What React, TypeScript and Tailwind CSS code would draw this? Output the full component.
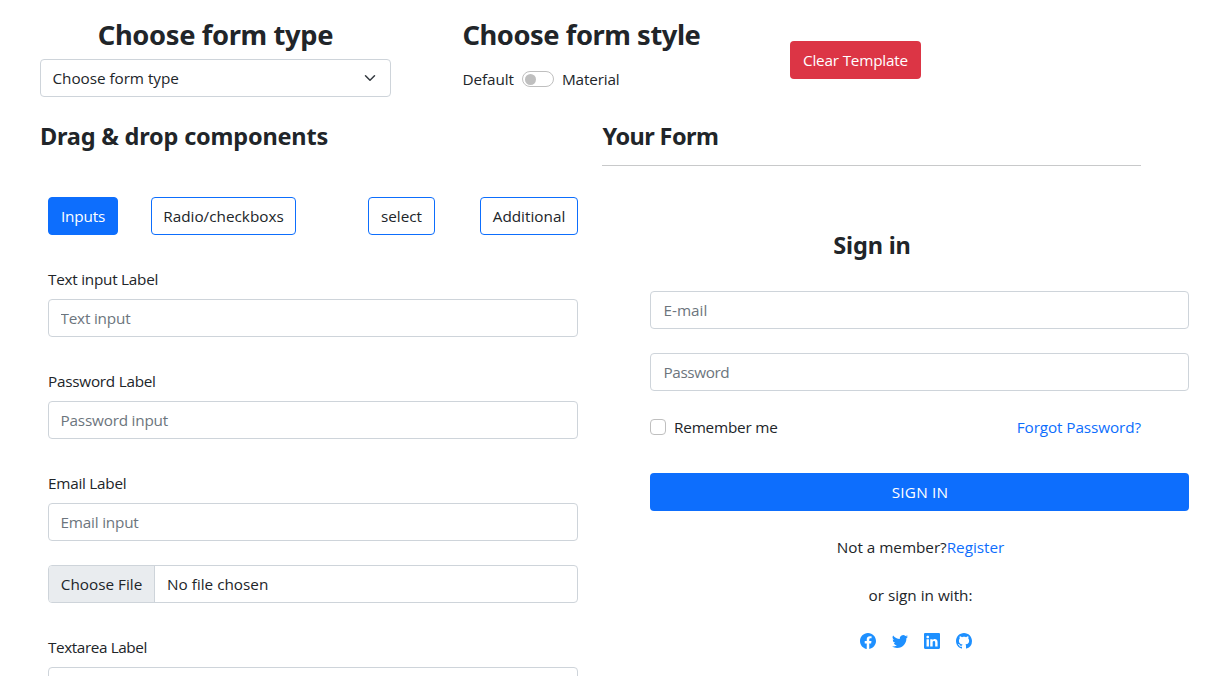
import type { ReactNode } from "react";
import { BsFacebook, BsTwitter, BsLinkedin, BsGithub } from "react-icons/bs";

function Heading({ className, children }: { className: string; children: ReactNode }) {
  return (
    <h2 className={`font-['Noto_Sans','Open_Sans',sans-serif] font-bold whitespace-nowrap ${className}`}>
      {children}
    </h2>
  );
}

function Field({ placeholder, type = "text", className = "" }: { placeholder: string; type?: string; className?: string }) {
  return (
    <input
      type={type}
      placeholder={placeholder}
      className={`block h-[38px] w-full rounded border border-[#ced4da] bg-white placeholder:text-[#6c757d] placeholder:opacity-100 ${className}`}
    />
  );
}

function LabelledField({ label, placeholder, type }: { label: string; placeholder: string; type?: string }) {
  return (
    <div className="mb-[33px]">
      <label className="mb-[9px] block h-[22px] leading-[22px] tracking-[-0.25px]">{label}</label>
      <Field placeholder={placeholder} type={type} className="px-[11.5px] tracking-[-0.2px]" />
    </div>
  );
}

function Tab({ className, children }: { className: string; children: ReactNode }) {
  return (
    <button className={`h-[38px] rounded border border-[#0d6efd] whitespace-nowrap ${className}`}>{children}</button>
  );
}

export default function App() {
  return (
    <div className="h-[676px] overflow-hidden bg-white pl-10 font-['Open_Sans','Noto_Sans',sans-serif] text-[15.3px] leading-6 text-[#212529]">
      <header className="flex h-[119px] items-start pt-[18px]">
        <div className="w-[351px]">
          <Heading className="mb-[7px] text-center text-[27.3px] leading-[34px] tracking-[-0.35px]">Choose form type</Heading>
          <button className="flex h-[38px] w-full items-center justify-between rounded border border-[#ced4da] pr-3 pl-[11.5px] tracking-[-0.05px]">
            <span>Choose form type</span>
            <svg viewBox="0 0 16 16" className="h-3 w-4" fill="none" stroke="#343a40" strokeWidth="2" strokeLinecap="round" strokeLinejoin="round">
              <path d="m2 5 6 6 6-6" />
            </svg>
          </button>
        </div>
        <div className="ml-[71.5px] w-60">
          <Heading className="mb-[15px] text-[27.3px] leading-[34px] tracking-[-0.45px]">Choose form style</Heading>
          <div className="flex items-center">
            <span className="w-[59.5px] tracking-[-0.1px]">Default</span>
            <span className="flex h-4 w-8 items-center rounded-full border border-[#bfbfbf] pl-[2px]">
              <span className="size-[11px] rounded-full bg-[#bfbfbf]" />
            </span>
            <span className="ml-2 tracking-[-0.15px]">Material</span>
          </div>
        </div>
        <button className="mt-[23px] ml-[87.5px] h-[38px] w-[131px] rounded bg-[#dc3545] tracking-[-0.2px] text-white">
          Clear Template
        </button>
      </header>

      <main className="flex items-start">
        <section className="w-[538px]">
          <Heading className="text-[23.5px] leading-[34px] tracking-[-0.2px]">Drag &amp; drop components</Heading>
          <div className="pl-2">
            <nav className="mt-[44px] mb-[33px] flex">
              <Tab className="w-[70px] bg-[#0d6efd] tracking-[-0.2px] text-white">Inputs</Tab>
              <Tab className="ml-[33px] w-[145px]">Radio/checkboxs</Tab>
              <Tab className="ml-[72px] w-[67px]">select</Tab>
              <Tab className="ml-[45px] w-[98px]">Additional</Tab>
            </nav>
            <LabelledField label="Text input Label" placeholder="Text input" />
            <LabelledField label="Password Label" placeholder="Password input" type="password" />
            <LabelledField label="Email Label" placeholder="Email input" type="email" />
            <div className="-mt-[9px] mb-[33px] flex h-[38px] items-stretch overflow-hidden rounded border border-[#ced4da]">
              <button className="w-[106px] border-r border-[#ced4da] bg-[#e9ecef]">Choose File</button>
              <span className="flex items-center pl-3">No file chosen</span>
            </div>
            <label className="mb-[9px] block h-[22px] leading-[22px] tracking-[-0.4px]">Textarea Label</label>
            <textarea className="block h-[86px] w-full resize-none rounded border border-[#ced4da]" />
          </div>
        </section>

        <section className="ml-6 w-[587px]">
          <div className="mb-[62px] h-[47px] w-[539px] border-b border-[#c8c9ca]">
            <Heading className="pl-[0.5px] text-[23.5px] leading-[34px] tracking-[-0.6px]">Your Form</Heading>
          </div>
          <Heading className="w-[540px] text-center text-[23.5px] leading-[34px] tracking-[-0.15px]">Sign in</Heading>
          <form className="mt-[29px] ml-12 w-[539px]">
            <Field placeholder="E-mail" className="mb-6 px-[12.5px]" />
            <Field placeholder="Password" type="password" className="mb-6 px-[12.5px] tracking-[-0.4px]" />
            <div className="flex items-center justify-between pr-12">
              <label className="flex items-center">
                <input type="checkbox" className="mr-2 size-4 appearance-none rounded border border-[#bfbfbf]" />
                <span className="tracking-[-0.2px]">Remember me</span>
              </label>
              <a className="tracking-[-0.1px] text-[#0d6efd]">Forgot Password?</a>
            </div>
            <button type="button" className="mt-[34px] h-[38px] w-full rounded bg-[#0d6efd] pl-px tracking-[0.2px] text-white">
              SIGN IN
            </button>
            <p className="mt-6 pl-[2px] text-center tracking-[-0.03px]">
              Not a member?<a className="text-[#0d6efd]">Register</a>
            </p>
            <p className="mt-6 pl-[2px] text-center">or sign in with:</p>
            <div className="mt-[26px] ml-[210px] flex gap-4 text-base text-[#1e90ff]">
              <BsFacebook />
              <BsTwitter />
              <BsLinkedin />
              <BsGithub />
            </div>
          </form>
        </section>
      </main>
    </div>
  );
}
